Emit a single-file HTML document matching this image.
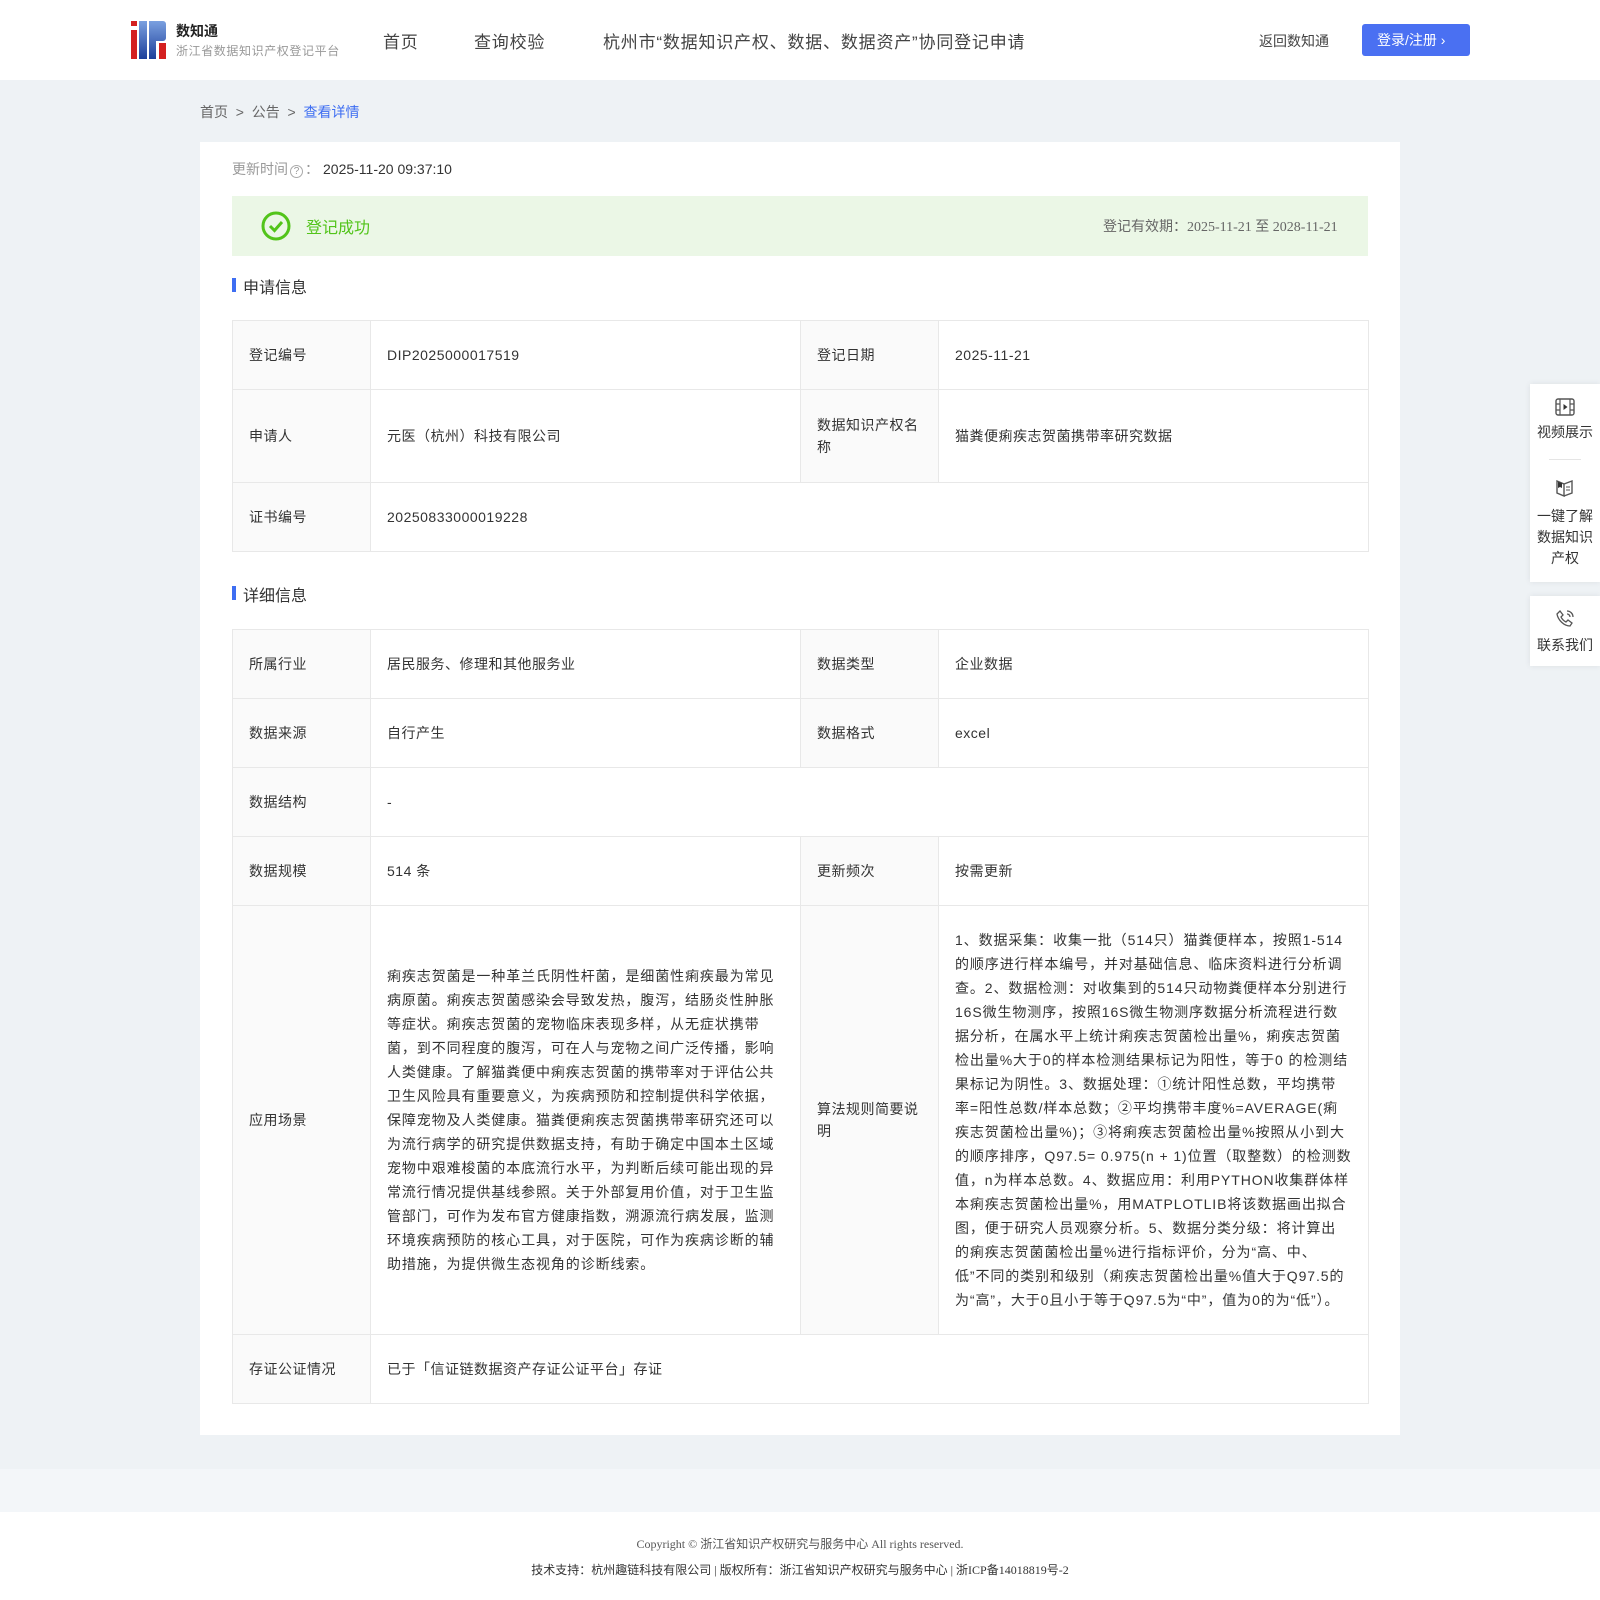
<!DOCTYPE html>
<html><head><meta charset="utf-8">
<style>
*{margin:0;padding:0;box-sizing:border-box}
body{width:1600px;height:1600px;position:relative;background:#fff;font-family:"Liberation Sans","Noto Sans CJK SC",sans-serif;color:#333;overflow:hidden}
.abs{position:absolute;white-space:nowrap}
#hdr{position:absolute;left:0;top:0;width:1600px;height:80px;background:#fff}
#bg{position:absolute;left:0;top:80px;width:1600px;height:1389px;background:#eef2f5}
#bg2{position:absolute;left:0;top:1469px;width:1600px;height:43px;background:#f3f6f9}
#panel{position:absolute;left:200px;top:142px;width:1200px;height:1293px;background:#fff}
table{position:absolute;left:232px;width:1136px;border-collapse:collapse;font-size:14px;letter-spacing:.5px;table-layout:fixed}
td{border:1px solid #e8e8e8;padding:0 16px;vertical-align:middle;line-height:22px;overflow:visible}
td.l{background:#fafafa}
.sec{font-size:16px;color:#333}
.sec:before{content:"";position:absolute;left:-11px;top:4px;width:4px;height:14px;background:#3e6ef2}
.side{position:absolute;left:1530px;width:70px;background:#fff;box-shadow:0 0 6px rgba(0,0,0,.08);text-align:center;font-size:14px;color:#333;line-height:21px}
.long{line-height:24px;white-space:nowrap;letter-spacing:.9px}
.nav{font-size:17px;color:#444;letter-spacing:.8px}
</style></head><body>
<div id="hdr"></div>
<div id="bg"></div><div id="bg2"></div>
<svg class="abs" style="left:131px;top:21px" width="35" height="38" viewBox="0 0 35 38">
<defs><linearGradient id="g" x1="0" y1="0" x2="0" y2="1"><stop offset="0" stop-color="#7aa0e0"/><stop offset="1" stop-color="#1d3f9a"/></linearGradient></defs>
<rect x="0" y="0" width="6" height="5" fill="#d42020"/><rect x="0" y="9" width="6" height="29" fill="#d42020"/>
<rect x="8" y="0" width="8" height="38" fill="url(#g)"/>
<path d="M18 0h14a3 3 0 0 1 3 3v14a3 3 0 0 1-3 3h-7v18h-7z" fill="url(#g)"/>
<rect x="28" y="22" width="7" height="16" fill="#d42020"/>
</svg>
<div class="abs" style="left:176px;top:21px;font-size:14px;font-weight:bold;color:#222">数知通</div>
<div class="abs" style="left:176px;top:42px;font-size:12px;color:#999;letter-spacing:.6px">浙江省数据知识产权登记平台</div>
<div class="abs nav" style="left:383px;top:28px">首页</div>
<div class="abs nav" style="left:474px;top:28px">查询校验</div>
<div class="abs nav" style="left:603px;top:28px">杭州市“数据知识产权、数据、数据资产”协同登记申请</div>
<div class="abs" style="left:1259px;top:31px;font-size:14px;color:#444">返回数知通</div>
<div class="abs" style="left:1362px;top:24px;width:108px;height:32px;background:#4a70f2;border-radius:3px;color:#fff;font-size:14px;line-height:32px;padding-left:15px">登录/注册 ›</div>

<div class="abs" style="left:200px;top:102px;font-size:14px;color:#666">首页 &nbsp;&gt;&nbsp; 公告 &nbsp;&gt;&nbsp; <span style="color:#3e6ef2">查看详情</span></div>
<div id="panel"></div>
<div class="abs" style="left:232px;top:159px;font-size:14px;color:#999">更新时间<span style="display:inline-block;width:13px;height:13px;border:1px solid #aaa;border-radius:50%;font-size:10px;line-height:11px;text-align:center;margin:0 2px;vertical-align:0px">?</span>：<span style="color:#333;margin-left:4px">2025-11-20 09:37:10</span></div>
<div class="abs" style="left:232px;top:196px;width:1136px;height:60px;background:#ebf7e6"></div>
<svg class="abs" style="left:261px;top:211px" width="30" height="30"><circle cx="15" cy="15" r="13" fill="none" stroke="#52c41a" stroke-width="3"/><path d="M9 15l4.5 4.5L21 11" fill="none" stroke="#52c41a" stroke-width="3"/></svg>
<div class="abs" style="left:306px;top:214px;font-size:16px;color:#52c41a">登记成功</div>
<div class="abs" style="left:1103px;top:216px;font-size:14px;color:#666">登记有效期：<span style="font-family:'Liberation Serif','Noto Sans CJK SC',serif">2025-11-21 至 2028-11-21</span></div>

<div class="abs sec" style="left:243px;top:274px">申请信息</div>
<table style="top:320px">
<colgroup><col style="width:138px"><col style="width:430px"><col style="width:138px"><col style="width:430px"></colgroup>
<tr style="height:69px"><td class="l">登记编号</td><td>DIP2025000017519</td><td class="l">登记日期</td><td>2025-11-21</td></tr>
<tr style="height:93px"><td class="l">申请人</td><td>元医（杭州）科技有限公司</td><td class="l">数据知识产权名称</td><td>猫粪便痢疾志贺菌携带率研究数据</td></tr>
<tr style="height:69px"><td class="l">证书编号</td><td colspan="3">20250833000019228</td></tr>
</table>

<div class="abs sec" style="left:243px;top:582px">详细信息</div>
<table style="top:629px">
<colgroup><col style="width:138px"><col style="width:430px"><col style="width:138px"><col style="width:430px"></colgroup>
<tr style="height:69px"><td class="l">所属行业</td><td>居民服务、修理和其他服务业</td><td class="l">数据类型</td><td>企业数据</td></tr>
<tr style="height:69px"><td class="l">数据来源</td><td>自行产生</td><td class="l">数据格式</td><td>excel</td></tr>
<tr style="height:69px"><td class="l">数据结构</td><td colspan="3">-</td></tr>
<tr style="height:69px"><td class="l">数据规模</td><td>514 条</td><td class="l">更新频次</td><td>按需更新</td></tr>
<tr style="height:429px"><td class="l">应用场景</td><td><div class="long">痢疾志贺菌是一种革兰氏阴性杆菌，是细菌性痢疾最为常见<br>病原菌。痢疾志贺菌感染会导致发热，腹泻，结肠炎性肿胀<br>等症状。痢疾志贺菌的宠物临床表现多样，从无症状携带<br>菌，到不同程度的腹泻，可在人与宠物之间广泛传播，影响<br>人类健康。了解猫粪便中痢疾志贺菌的携带率对于评估公共<br>卫生风险具有重要意义，为疾病预防和控制提供科学依据，<br>保障宠物及人类健康。猫粪便痢疾志贺菌携带率研究还可以<br>为流行病学的研究提供数据支持，有助于确定中国本土区域<br>宠物中艰难梭菌的本底流行水平，为判断后续可能出现的异<br>常流行情况提供基线参照。关于外部复用价值，对于卫生监<br>管部门，可作为发布官方健康指数，溯源流行病发展，监测<br>环境疾病预防的核心工具，对于医院，可作为疾病诊断的辅<br>助措施，为提供微生态视角的诊断线索。</div></td><td class="l">算法规则简要说明</td><td><div class="long">1、数据采集：收集一批（514只）猫粪便样本，按照1-514<br>的顺序进行样本编号，并对基础信息、临床资料进行分析调<br>查。2、数据检测：对收集到的514只动物粪便样本分别进行<br>16S微生物测序，按照16S微生物测序数据分析流程进行数<br>据分析，在属水平上统计痢疾志贺菌检出量%，痢疾志贺菌<br>检出量%大于0的样本检测结果标记为阳性，等于0 的检测结<br>果标记为阴性。3、数据处理：①统计阳性总数，平均携带<br>率=阳性总数/样本总数；②平均携带丰度%=AVERAGE(痢<br>疾志贺菌检出量%)；③将痢疾志贺菌检出量%按照从小到大<br>的顺序排序，Q97.5= 0.975(n + 1)位置（取整数）的检测数<br>值，n为样本总数。4、数据应用：利用PYTHON收集群体样<br>本痢疾志贺菌检出量%，用MATPLOTLIB将该数据画出拟合<br>图，便于研究人员观察分析。5、数据分类分级：将计算出<br>的痢疾志贺菌菌检出量%进行指标评价，分为“高、中、<br>低”不同的类别和级别（痢疾志贺菌检出量%值大于Q97.5的<br>为“高”，大于0且小于等于Q97.5为“中”，值为0的为“低”）。</div></td></tr>
<tr style="height:69px"><td class="l">存证公证情况</td><td colspan="3">已于「信证链数据资产存证公证平台」存证</td></tr>
</table>

<div class="side" style="top:384px;height:198px">
<svg style="margin-top:14px" width="20" height="18" viewBox="0 0 20 18"><rect x="1" y="1" width="18" height="16" rx="2" fill="none" stroke="#555" stroke-width="1.4"/><path d="M5 1v16M15 1v16M1 6h4M1 12h4M15 6h4M15 12h4" stroke="#555" stroke-width="1.2"/><path d="M8.5 6l4 3-4 3z" fill="#333"/></svg>
<div>视频展示</div>
<div style="width:32px;height:1px;background:#e5e5e5;margin:16px auto 19px"></div>
<svg width="20" height="18" viewBox="0 0 20 18"><path d="M2 2l7 3v12l-7-3zM9 5l8-3v12l-8 3" fill="none" stroke="#555" stroke-width="1.4"/><path d="M3 3v6l2-1 2 1V4" fill="#333"/><path d="M11 8h4M11 11h4" stroke="#555"/></svg>
<div style="margin-top:3px">一键了解<br>数据知识<br>产权</div>
</div>
<div class="side" style="top:596px;height:70px">
<svg style="margin-top:13px" width="20" height="20" viewBox="0 0 20 20"><path d="M5 2l3 4-2 2c1 2 3 4 5 5l2-2 4 3-2 3C9 17 3 11 2 5z" fill="none" stroke="#555" stroke-width="1.3"/><path d="M12 2a6 6 0 0 1 6 6M12 5a3 3 0 0 1 3 3" fill="none" stroke="#555" stroke-width="1.3"/></svg>
<div>联系我们</div>
</div>

<div class="abs" style="left:0;width:1600px;top:1535px;text-align:center;font-family:'Liberation Serif','Noto Sans CJK SC',serif;font-size:12px;color:#555">Copyright © 浙江省知识产权研究与服务中心 All rights reserved.</div>
<div class="abs" style="left:0;width:1600px;top:1561px;text-align:center;font-family:'Liberation Serif','Noto Sans CJK SC',serif;font-size:12px;color:#333">技术支持：杭州趣链科技有限公司 | 版权所有：浙江省知识产权研究与服务中心 | 浙ICP备14018819号-2</div>
</body></html>
